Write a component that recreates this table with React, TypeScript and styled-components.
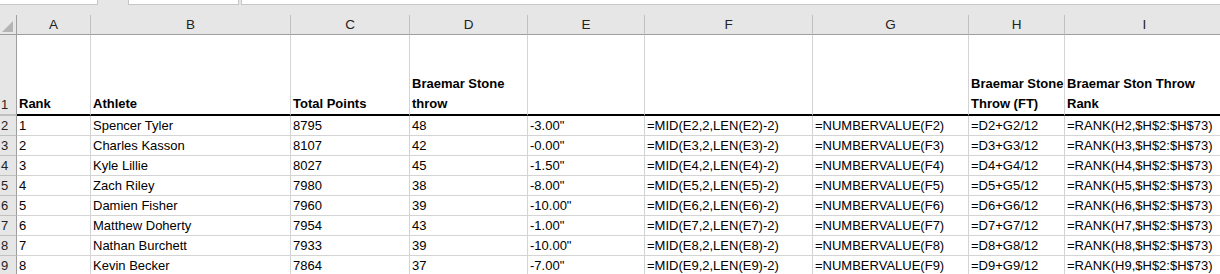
import { Fragment } from "react";
import styled, { createGlobalStyle } from "styled-components";

const GlobalStyle = createGlobalStyle`
  html, body {
    margin: 0;
    padding: 0;
    background: #ffffff;
    overflow: hidden;
  }
  body {
    font-family: "Liberation Sans", Arial, sans-serif;
  }
`;

const COLS = ["A", "B", "C", "D", "E", "F", "G", "H", "I"];
const WIDTHS = [17, 74, 200, 119, 118, 117, 168, 156, 96, 160];

const HEADERS: string[][] = [
  ["Rank"],
  ["Athlete"],
  ["Total Points"],
  ["Braemar Stone", "throw"],
  [],
  [],
  [],
  ["Braemar Stone", "Throw (FT)"],
  ["Braemar Ston Throw", "Rank"],
];

const ATHLETES = [
  ["Spencer Tyler", "8795", "48", "-3.00\""],
  ["Charles Kasson", "8107", "42", "-0.00\""],
  ["Kyle Lillie", "8027", "45", "-1.50\""],
  ["Zach Riley", "7980", "38", "-8.00\""],
  ["Damien Fisher", "7960", "39", "-10.00\""],
  ["Matthew Doherty", "7954", "43", "-1.00\""],
  ["Nathan Burchett", "7933", "39", "-10.00\""],
  ["Kevin Becker", "7864", "37", "-7.00\""],
];

const rows = ATHLETES.map(([name, pts, stone, diff], i) => {
  const r = i + 2;
  return [
    String(i + 1),
    name,
    pts,
    stone,
    diff,
    `=MID(E${r},2,LEN(E${r})-2)`,
    `=NUMBERVALUE(F${r})`,
    `=D${r}+G${r}/12`,
    `=RANK(H${r},$H$2:$H$73)`,
  ];
});

const Page = styled.div`
  width: 1220px;
  height: 274px;
  overflow: hidden;
  background: #e6e6e6;
`;

const TopStrip = styled.div`
  display: flex;
  height: 5px;
`;

const TopBox = styled.div<{ $w?: number; $grow?: boolean }>`
  box-sizing: border-box;
  width: ${(p) => (p.$w ? `${p.$w}px` : "auto")};
  flex: ${(p) => (p.$grow ? "1" : "none")};
  background: #ffffff;
  border: 1px solid #c6c6c6;
  border-top: none;
`;

const TopGap = styled.div<{ $w: number }>`
  width: ${(p) => p.$w}px;
`;

const Filler = styled.div`
  height: 10px;
`;

const Sheet = styled.div`
  display: grid;
  grid-template-columns: ${WIDTHS.map((w) => `${w}px`).join(" ")};
  grid-template-rows: 20px 81px;
  grid-auto-rows: 20px;
  background: #ffffff;
  font-size: 13px;
  color: #000000;
`;

const Corner = styled.div`
  box-sizing: border-box;
  background: #e6e6e6;
  border-right: 1px solid #9e9e9e;
  border-bottom: 1px solid #9e9e9e;
  display: flex;
  align-items: flex-end;
  justify-content: flex-end;
  padding: 0 3px 2px 0;
`;

const ColHead = styled.div`
  box-sizing: border-box;
  background: #e6e6e6;
  border-right: 1px solid #c0c0c0;
  border-bottom: 1px solid #9e9e9e;
  color: #222222;
  font-size: 13.5px;
  text-align: center;
  line-height: 19px;
`;

const RowHead = styled.div<{ $header?: boolean }>`
  box-sizing: border-box;
  background: #e6e6e6;
  border-right: 1px solid #9e9e9e;
  border-bottom: ${(p) => (p.$header ? "2px" : "1px")} solid #c0c0c0;
  color: #222222;
  padding-left: 1px;
  display: flex;
  flex-direction: column;
  justify-content: flex-end;
  line-height: 19px;
`;

const Cell = styled.div<{ $header?: boolean }>`
  box-sizing: border-box;
  border-right: 1px solid #d4d4d4;
  border-bottom: ${(p) => (p.$header ? "2px solid #000000" : "1px solid #d4d4d4")};
  padding-left: 2px;
  display: flex;
  flex-direction: column;
  justify-content: flex-end;
  white-space: nowrap;
  overflow: hidden;
  font-weight: ${(p) => (p.$header ? 700 : 400)};
  line-height: ${(p) => (p.$header ? "20px" : "19px")};
`;

const SelectAll = () => (
  <svg width="11" height="11" viewBox="0 0 11 11">
    <polygon points="11,0 11,11 0,11" fill="#b4b4b4" />
  </svg>
);

export default function App() {
  return (
    <>
      <GlobalStyle />
      <Page>
        <TopStrip>
          <TopBox $w={98} style={{ borderLeft: "none" }} />
          <TopGap $w={30} />
          <TopBox $w={111} />
          <TopGap $w={2} />
          <TopBox $grow style={{ borderRight: "none" }} />
        </TopStrip>
        <Filler />
        <Sheet>
          <Corner>
            <SelectAll />
          </Corner>
          {COLS.map((c) => (
            <ColHead key={c}>{c}</ColHead>
          ))}

          <RowHead $header>1</RowHead>
          {HEADERS.map((lines, i) => (
            <Cell $header key={i}>
              {lines.map((l) => (
                <span key={l}>{l}</span>
              ))}
            </Cell>
          ))}

          {rows.map((row, ri) => (
            <Fragment key={ri}>
              <RowHead>{ri + 2}</RowHead>
              {row.map((v, ci) => (
                <Cell key={ci}>{v}</Cell>
              ))}
            </Fragment>
          ))}
        </Sheet>
      </Page>
    </>
  );
}
